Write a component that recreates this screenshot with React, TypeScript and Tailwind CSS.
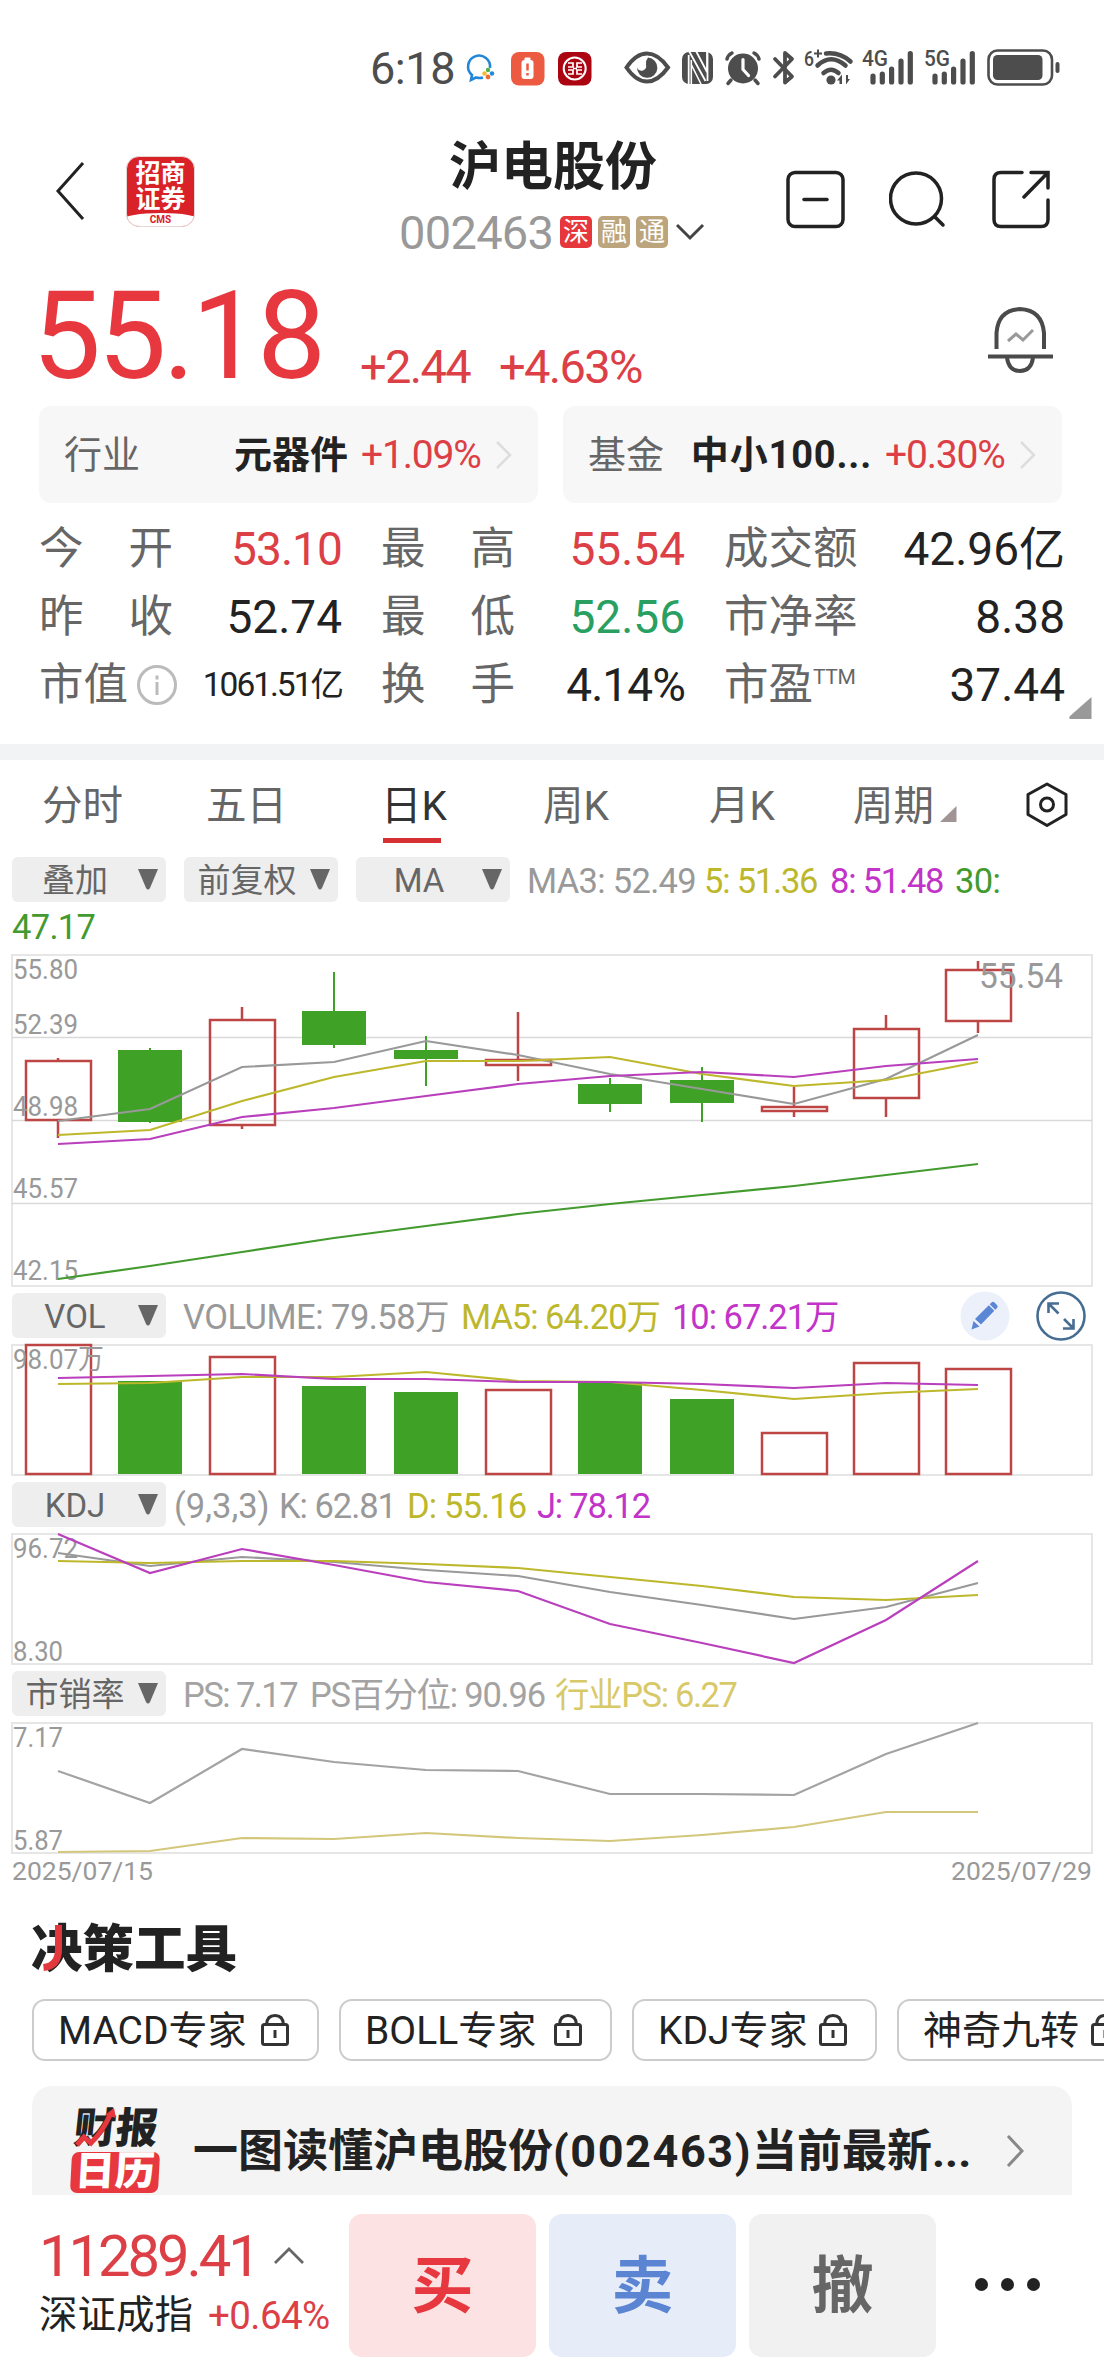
import React from 'react';

const STEP = 92;
const FIRST_X = 58;

const RED = '#bd4644';
const GREEN = '#3fa125';
const YELLOW = '#bdb82b';
const MAGENTA = '#b93fbd';
const GRAY = '#999999';

interface Candle {
  up: boolean;
  top: number;
  bottom: number;
  high: number;
  low: number;
}

const candles: Candle[] = [
  { up: true, top: 106, bottom: 165, high: 103, low: 183 },
  { up: false, top: 95, bottom: 167, high: 93, low: 168 },
  { up: true, top: 65, bottom: 170, high: 52, low: 174 },
  { up: false, top: 56, bottom: 90, high: 17, low: 93 },
  { up: false, top: 95, bottom: 104, high: 81, low: 131 },
  { up: true, top: 105, bottom: 110, high: 57, low: 126 },
  { up: false, top: 129, bottom: 149, high: 123, low: 157 },
  { up: false, top: 125, bottom: 148, high: 112, low: 167 },
  { up: true, top: 152, bottom: 156, high: 132, low: 162 },
  { up: true, top: 74, bottom: 143, high: 60, low: 162 },
  { up: true, top: 15, bottom: 66, high: 6, low: 78 },
];

const volumes = [0, 36, 12, 41, 47, 45, 37, 54, 88, 18, 24];

const Line: React.FC<{ data: number[]; color: string }> = ({ data, color }) => (
  <polyline
    points={data.map((y, i) => `${FIRST_X + i * STEP},${y}`).join(' ')}
    fill="none"
    stroke={color}
    strokeWidth={2.2}
  />
);

interface AxisLabelProps {
  x?: number;
  y: number;
  width: number;
  size?: number;
  children: string;
}

const AxisLabel: React.FC<AxisLabelProps> = ({ x = 13, y, width, size = 28, children }) => (
  <text x={x} y={y} fontSize={size} fill={GRAY} textLength={width} lengthAdjust="spacingAndGlyphs">
    {children}
  </text>
);

const Frame: React.FC<{ height: number; children: React.ReactNode }> = ({ height, children }) => (
  <svg width="1104" height={height} viewBox={`0 0 1104 ${height}`} className="block shrink-0 overflow-visible">
    <rect x="12" y="0" width="1080" height={height} fill="none" stroke="#e6e6e6" strokeWidth="2" />
    {children}
  </svg>
);

const Pill: React.FC<{ label: string; className?: string }> = ({ label, className = '' }) => (
  <div className={`w-[154px] h-[45px] shrink-0 rounded-[6px] bg-[#eeeeee] flex items-center text-[33px] text-[#666666] ${className}`}>
    <span className="w-[126px] text-center whitespace-nowrap pt-[2px]">{label}</span>
    <svg width="20" height="21" viewBox="0 0 20 21" className="shrink-0">
      <path d="M0 0h20l-8 19q-2 3-4 0z" fill="#666666" />
    </svg>
  </div>
);

const Legend: React.FC<{ className: string; children: string }> = ({ className, children }) => (
  <span className={`shrink-0 pt-[3px] ${className}`}>{children}</span>
);

const Lock = () => (
  <svg width="28" height="32" viewBox="0 0 28 32" fill="none" stroke="#333333" strokeWidth="3" className="shrink-0">
    <rect x="1.5" y="10.5" width="25" height="20" rx="2" />
    <path d="M5.500 10.500Q6 1.500 14 1.500T22.500 10.500" />
    <path d="M14 16v8" />
  </svg>
);

const Chip: React.FC<{ label: string; className: string }> = ({ label, className }) => (
  <div className={`h-[62px] shrink-0 rounded-[13px] border-2 border-[#cccccc] flex items-center justify-between pl-[24px] pr-[28px] text-[39px] text-[#222222] ${className}`}>
    <span className="whitespace-nowrap pt-[2px]">{label}</span>
    <Lock />
  </div>
);

const Chevron: React.FC<{ className?: string; color: string }> = ({ className = '', color }) => (
  <svg width="18" height="32" viewBox="0 0 18 32" fill="none" stroke={color} strokeWidth="3" className={`shrink-0 ${className}`}>
    <path d="M2 1l14 15L2 31" />
  </svg>
);

const SignalBars: React.FC<{ x: number; label: string }> = ({ x, label }) => (
  <g>
    <text x={x - 1} y="66" fontSize="22" fontWeight="500" textLength="26" lengthAdjust="spacingAndGlyphs">{label}</text>
    <path
      d={`M${x + 10} 76v6M${x + 19.300} 74v8M${x + 28.600} 69v13M${x + 38} 61v21M${x + 47.300} 53.500v28.500`}
      stroke="#4d4d4d"
      strokeWidth="5.200"
      strokeLinecap="round"
    />
  </g>
);

const StatusBar = () => (
  <div className="h-[100px] shrink-0 flex pl-[370px] pt-[36px]">
    <span className="w-[90px] h-[64px] leading-[65px] text-[45px] text-[#4d4d4d] tracking-[-0.01em]">6:18</span>
    <svg width="620" height="64" viewBox="460 36 620 64" fill="#4d4d4d">
      {/* chat */}
      <path d="M490 68a11 11 0 1 0-18 7l-1 5 5-2.500q4 1 7 0" fill="none" stroke="#2386d9" strokeWidth="2.600" />
      <circle cx="488" cy="70" r="2.200" fill="#4fb443" />
      <circle cx="492" cy="73.500" r="2.200" fill="#2386d9" />
      <circle cx="488" cy="77" r="2.400" fill="#ee6d36" />
      <circle cx="484.500" cy="73.500" r="2.200" fill="#f3bb2c" />
      {/* battery warning */}
      <rect x="511" y="52" width="33.500" height="33.500" rx="8" fill="#ed5a42" />
      <rect x="521.500" y="60" width="12" height="19" rx="3" fill="#fff" />
      <rect x="524.500" y="57.500" width="6" height="3" rx="1" fill="#fff" />
      <path d="M527.500 63.500v7M527.500 73v2.500" stroke="#ed5a42" strokeWidth="2.500" />
      {/* bank */}
      <rect x="558" y="52" width="33.500" height="33.500" rx="8" fill="#ab0512" />
      <circle cx="574.700" cy="68.500" r="11" fill="none" stroke="#fff" strokeWidth="2" />
      <path d="M568 63h5v4h-5M568 70h5v4h-5M582 63h-5v4h5M582 70h-5v4h5M573 68.500h4" fill="none" stroke="#fff" strokeWidth="1.700" />
      {/* eye */}
      <path d="M626.500 67.500Q636 53.500 647 53.500T668 67.500Q658 81.500 647 81.500T626.500 67.500Z" fill="none" stroke="#4d4d4d" strokeWidth="4" />
      <path d="M648 57.500a10.200 10.200 0 1 1-11 10q2 4 6 3 4-1.500 3-6-.5-4 2-7z" />
      {/* nfc */}
      <rect x="682" y="52" width="31" height="32" rx="7" />
      <path d="M688.700 55v30M689 51l16.500 30M696 51l11 21v-21M707.500 51v30" fill="none" stroke="#fff" strokeWidth="1.800" />
      <path d="M691.500 62v22h8z" fill="#4d4d4d" />
      <path d="M691.300 60v25M691.500 65l9.500 19" fill="none" stroke="#fff" strokeWidth="1.600" />
      {/* alarm */}
      <circle cx="743" cy="68.500" r="15" />
      <path d="M727 59q1-4 5-6M759 59q-1-4-5-6M731 80l-3 3.500M755 80l3 3.500" fill="none" stroke="#4d4d4d" strokeWidth="3.500" strokeLinecap="round" />
      <path d="M743 59.500v10l5.500 6" fill="none" stroke="#fff" strokeWidth="3.200" strokeLinecap="round" />
      {/* bluetooth */}
      <path d="M775 59l17 17.500-7 6v-29.500l7 6-17 17.500" fill="none" stroke="#4d4d4d" strokeWidth="3.800" strokeLinejoin="round" strokeLinecap="round" />
      {/* wifi */}
      <text x="804" y="65.500" fontSize="21" fontWeight="500" textLength="10" lengthAdjust="spacingAndGlyphs">6</text>
      <path d="M814 53.500h8M818 49.500v8" stroke="#4d4d4d" strokeWidth="2" />
      <path d="M826 53.500q14-1.500 24.500 8M817.500 65.500q13.500-12.500 28 0M823.500 73q7.500-6.500 15 0" fill="none" stroke="#4d4d4d" strokeWidth="4.500" strokeLinecap="round" />
      <circle cx="831" cy="80" r="4.600" />
      <path d="M837 80.500l5-6v9.500h-2.500v-3.500zM850 79l-4 5.500v-9.500h2v4z" />
      <SignalBars x={863} label="4G" />
      <SignalBars x={925} label="5G" />
      {/* battery */}
      <rect x="988.500" y="50.500" width="63.500" height="34" rx="9" fill="none" stroke="#4d4d4d" strokeWidth="2.600" />
      <rect x="993" y="55" width="49.500" height="25" rx="4.500" />
      <rect x="1055.500" y="62" width="4" height="11" rx="2" />
    </svg>
  </div>
);

const Header = () => (
  <div className="h-[160px] shrink-0 flex">
    <svg width="30" height="60" viewBox="0 0 30 60" fill="none" stroke="#222" strokeWidth="3" className="ml-[55px] mt-[61px]">
      <path d="M28 2L3 30l25 28" />
    </svg>
    <div className="ml-[41px] mt-[56px] w-[69px] h-[71px] rounded-[13px] bg-[#d92128] border border-[#e5d5d5] overflow-hidden flex flex-col items-center">
      <div className="pt-[4px] h-[57px] text-[25px] leading-[26px] font-bold text-white text-center whitespace-nowrap">
        招商
        <br />
        证券
      </div>
      <div className="w-[76px] h-[14px] rounded-t-[50%] bg-white text-[#d92128] text-[10px] leading-[13px] font-bold text-center">CMS</div>
    </div>
    <div className="ml-[203px] w-[308px] flex flex-col">
      <div className="mt-[42px] ml-[51px] text-[52px] h-[54px] font-bold text-[#222222] whitespace-nowrap">沪电股份</div>
      <div className="mt-[13px] flex items-center h-[46px]">
        <span className="w-[162px] pl-px pt-px text-[47px] text-[#999999] tracking-[-0.015em]">002463</span>
        <div className="flex gap-[6px] text-[26px] leading-[32px] text-center text-white">
          <span className="w-[32px] h-[32px] rounded-[5px] bg-[#e6373d]">深</span>
          <span className="w-[32px] h-[32px] rounded-[5px] bg-[#bca47d]">融</span>
          <span className="w-[32px] h-[32px] rounded-[5px] bg-[#bca47d]">通</span>
        </div>
        <svg width="30" height="18" viewBox="0 0 30 18" fill="none" stroke="#444" strokeWidth="3" className="ml-[7px]">
          <path d="M2 2l13 13L28 2" />
        </svg>
      </div>
    </div>
    <div className="ml-[80px] mt-[70px] flex gap-[43px]">
      <svg width="60" height="60" viewBox="0 0 60 60" fill="none" stroke="#222" strokeWidth="3.500" strokeLinecap="round">
        <rect x="2" y="2.500" width="55" height="54" rx="7" />
        <path d="M18 29.500h23" />
      </svg>
      <svg width="60" height="60" viewBox="0 0 60 60" fill="none" stroke="#222" strokeWidth="3.500" strokeLinecap="round">
        <circle cx="27" cy="28.500" r="25.500" />
        <path d="M46 47l8 8" />
      </svg>
      <svg width="60" height="60" viewBox="0 0 60 60" fill="none" stroke="#222" strokeWidth="3.500" strokeLinecap="round">
        <path d="M30 2.500H9q-7 0-7 7v40q0 7 7 7h40q7 0 7-7V30M39 2.500h17V18M56 2.500L32 27" />
      </svg>
    </div>
  </div>
);

const Price = () => (
  <div className="h-[146px] shrink-0 flex text-[#e6383e]">
    <span className="w-[323px] pl-[32px] pt-[15px] text-[123px] tracking-[-0.03em]">55.18</span>
    <span className="w-[139px] pl-[37px] pt-[83px] text-[47px] text-[#dc4046] tracking-[-0.035em]">+2.44</span>
    <span className="w-[200px] pl-[37px] pt-[83px] text-[47px] text-[#dc4046] tracking-[-0.035em]">+4.63%</span>
    <svg width="68" height="70" viewBox="0 0 68 70" fill="none" stroke="#4a4a4a" strokeWidth="4" className="ml-[324px] mt-[46px]">
      <path d="M10.500 43V27Q12 4 34 3q22 1 24 24v16M2 50.500h65" />
      <path d="M21 52q2 13 13 13t13-13" />
      <path d="M22 35l8-7 7 6 10-10" stroke="#999" strokeWidth="3" />
    </svg>
  </div>
);

interface BoardCardProps {
  kind: string;
  name: string;
  change: string;
}

const BoardCard: React.FC<BoardCardProps> = ({ kind, name, change }) => (
  <div className="w-[499px] h-[97px] rounded-[12px] bg-[#f7f7f7] flex items-center pl-[25px] pr-[26px] text-[38px] whitespace-nowrap">
    <span className="text-[#666666]">{kind}</span>
    <span className={`ml-auto font-bold text-[#222222] ${name.endsWith('...') ? 'tracking-[0.022em]' : ''}`}>{name}</span>
    <span className="ml-[13px] w-[122px] pt-[2px] text-[39px] text-[#dc4046] tracking-[-0.03em]">{change}</span>
    <svg width="16" height="28" viewBox="0 0 16 28" fill="none" stroke="#dddddd" strokeWidth="2.500" className="ml-[13px]">
      <path d="M1 1l13 13L1 27" />
    </svg>
  </div>
);

const Stat: React.FC<{ label: React.ReactNode; value: string; valueClass?: string }> = ({
  label,
  value,
  valueClass = 'text-[46px] text-[#222222]',
}) => (
  <div className="h-[68px] flex items-center justify-between">
    <div className="w-[134px] shrink-0 flex justify-between items-center text-[44.5px] text-[#666666] whitespace-nowrap">{label}</div>
    <span className={`whitespace-nowrap ${valueClass}`}>{value}</span>
  </div>
);

const Spread: React.FC<{ a: string; b: string }> = ({ a, b }) => (
  <>
    <span>{a}</span>
    <span>{b}</span>
  </>
);

const Stats = () => (
  <div className="relative mt-[12px] h-[229px] shrink-0 grid grid-cols-[303px_304px_341px] gap-x-[39px] pl-[39px] content-start">
    <Stat label={<Spread a="今" b="开" />} value="53.10" valueClass="text-[46px] text-[#dc4046] tracking-[-0.02em]" />
    <Stat label={<Spread a="最" b="高" />} value="55.54" valueClass="text-[46px] text-[#dc4046]" />
    <Stat label="成交额" value="42.96亿" />
    <Stat label={<Spread a="昨" b="收" />} value="52.74" />
    <Stat label={<Spread a="最" b="低" />} value="52.56" valueClass="text-[46px] text-[#29a061]" />
    <Stat label="市净率" value="8.38" />
    <Stat
      label={
        <>
          <span>市值</span>
          <svg width="40" height="40" viewBox="0 0 40 40" fill="none" stroke="#bbbbbb" strokeWidth="3" className="relative left-[4px]">
            <circle cx="20" cy="20" r="18.500" />
            <path d="M20 17v13M20 10.500v4" />
          </svg>
        </>
      }
      value="1061.51亿"
      valueClass="text-[33.5px] text-[#222222] tracking-[-0.06em]"
    />
    <Stat label={<Spread a="换" b="手" />} value="4.14%" valueClass="text-[46px] text-[#222222] tracking-[-0.02em]" />
    <Stat
      label={
        <div className="flex">
          <span>市盈</span>
          <span className="text-[21px] pt-[4px] tracking-[-0.02em]">TTM</span>
        </div>
      }
      value="37.44"
    />
    <svg width="23" height="23" viewBox="0 0 23 23" className="absolute left-[1069px] top-[182px]">
      <path d="M22.500 0v22H2q-3 0-1-3z" fill="#999" />
    </svg>
  </div>
);

const tabs = [
  { label: '分时', className: 'w-[164px]' },
  { label: '五日', className: 'w-[175px]' },
  { label: '日K', className: 'w-[162px] text-[#333333]' },
  { label: '周K', className: 'w-[166px]' },
  { label: '月K', className: 'w-[144px]' },
  { label: '周期', className: 'w-[87px]' },
];

const Tabs = () => (
  <div className="h-[97px] shrink-0 flex pl-[42px] text-[40.5px] text-[#666666]">
    {tabs.map((tab) => (
      <div key={tab.label} className={`shrink-0 pt-[26px] ${tab.className}`}>
        {tab.label}
        {tab.label === '日K' && <div className="mt-[11px] ml-[2px] w-[58px] h-[5px] bg-[#d63032]" />}
      </div>
    ))}
    <svg width="17" height="17" viewBox="0 0 17 17" className="mt-[46px]">
      <path d="M16.500 0v16H0z" fill="#a09594" />
    </svg>
    <svg width="44" height="46" viewBox="0 0 44 46" fill="none" stroke="#222" strokeWidth="3" strokeLinejoin="round" className="ml-[68px] mt-[22px]">
      <path d="M22 2l19 10.500v20L22 43.500 3 32.500v-20z" />
      <circle cx="22" cy="22.500" r="6.500" />
    </svg>
  </div>
);

const KLineSection = () => (
  <div className="flex flex-col text-[34.5px] whitespace-nowrap">
    <div className="h-[98px] shrink-0">
      <div className="h-[45px] flex items-center pl-[12px]">
        <Pill label="叠加" />
        <Pill label="前复权" className="ml-[18px]" />
        <Pill label="MA" className="ml-[18px]" />
        <Legend className="ml-[17px] w-[177px] text-[#999999] tracking-[-0.02em]">MA3: 52.49</Legend>
        <Legend className="w-[126px] text-[#bdb82b] tracking-[-0.035em]">5: 51.36</Legend>
        <Legend className="w-[125px] text-[#c233c8] tracking-[-0.035em]">8: 51.48</Legend>
        <Legend className="text-[#439a2e] tracking-[-0.02em]">30:</Legend>
      </div>
      <div className="h-[50px] flex items-center pl-[12px] text-[#439a2e] tracking-[-0.02em]">47.17</div>
    </div>

    <Frame height={331}>
      <path d="M12 82.500h1080M12 165.500h1080M12 248.500h1080" stroke="#d9d9d9" strokeWidth="1.500" />
      {candles.map((c, i) => {
        const x = FIRST_X + i * STEP;
        return c.up ? (
          <g key={i} fill="none" stroke={RED} strokeWidth="2.500">
            <rect x={x - 32} y={c.top} width="65" height={c.bottom - c.top} />
            <path d={`M${x} ${c.high}V${c.top}M${x} ${c.bottom}V${c.low}`} />
          </g>
        ) : (
          <g key={i} fill={GREEN}>
            <rect x={x - 32} y={c.top} width="64" height={c.bottom - c.top} />
            <rect x={x - 1} y={c.high} width="2" height={c.low - c.high} />
          </g>
        );
      })}
      <AxisLabel y={24} width={65}>55.80</AxisLabel>
      <AxisLabel y={79} width={65}>52.39</AxisLabel>
      <AxisLabel y={161} width={65}>48.98</AxisLabel>
      <AxisLabel y={243} width={65}>45.57</AxisLabel>
      <AxisLabel y={325} width={65}>42.15</AxisLabel>
      <Line color={GRAY} data={[166, 154, 112, 107, 86, 100, 119, 134, 149, 124, 80]} />
      <Line color={YELLOW} data={[180, 175, 146, 122, 106, 106, 102, 119, 131, 125, 107]} />
      <Line color={MAGENTA} data={[189, 184, 162, 153, 141, 129, 121, 117, 122, 111, 104]} />
      <Line color="#439a2e" data={[324, 311, 297, 283, 271, 259, 249, 240, 231, 220, 209]} />
      <AxisLabel x={979} y={33} width={84} size={35}>55.54</AxisLabel>
    </Frame>

    <div className="mt-[7px] h-[45px] flex items-center pl-[12px]">
      <Pill label="VOL" />
      <Legend className="ml-[17px] w-[278px] text-[#999999] tracking-[-0.015em]">VOLUME: 79.58万</Legend>
      <Legend className="w-[211px] text-[#bdb82b] tracking-[-0.03em]">MA5: 64.20万</Legend>
      <Legend className="w-[288px] text-[#c233c8] tracking-[-0.03em]">10: 67.21万</Legend>
      <svg width="50" height="50" viewBox="0 0 50 50" className="shrink-0">
        <circle cx="25" cy="25" r="24.500" fill="#ebf0fa" />
        <path d="M11.500 38.500l2-8.500 6 5.500zM15 28L31.500 11.500q1.500-1.500 3 0l2.500 2.500q1.500 1.500 0 3L21 33.500z" fill="#5b86d5" />
        <path d="M28.500 13l7 7" stroke="#ebf0fa" strokeWidth="1.200" />
      </svg>
      <svg width="50" height="50" viewBox="0 0 50 50" fill="none" stroke="#466d92" strokeWidth="2.600" className="shrink-0 ml-[26px]">
        <circle cx="25" cy="25" r="23.500" />
        <path d="M12.500 22V12.500H23M12.500 12.500L22.500 22.500M37.500 28v9.500H27M37.500 37.500L28 28" />
      </svg>
    </div>
    <div className="h-[7px] shrink-0" />

    <Frame height={130}>
      {volumes.map((top, i) => {
        const x = FIRST_X + i * STEP;
        return candles[i].up ? (
          <rect key={i} x={x - 32} y={top} width="65" height={129 - top} fill="none" stroke={RED} strokeWidth="2.500" />
        ) : (
          <rect key={i} x={x - 32} y={top} width="64" height={129 - top} fill={GREEN} />
        );
      })}
      <AxisLabel y={24} width={91}>98.07万</AxisLabel>
      <Line color={YELLOW} data={[39, 38, 32, 32, 27, 36, 37, 45, 54, 48, 44]} />
      <Line color={MAGENTA} data={[33, 31, 29, 34, 34, 37, 37, 39, 43, 38, 40]} />
    </Frame>

    <div className="my-[7px] h-[45px] flex items-center pl-[12px]">
      <Pill label="KDJ" />
      <Legend className="ml-[8px] w-[105px] text-[#999999]">(9,3,3)</Legend>
      <Legend className="w-[128px] text-[#999999] tracking-[-0.03em]">K: 62.81</Legend>
      <Legend className="w-[130px] text-[#bdb82b] tracking-[-0.025em]">D: 55.16</Legend>
      <Legend className="text-[#c233c8] tracking-[-0.035em]">J: 78.12</Legend>
    </div>

    <Frame height={130}>
      <AxisLabel y={24} width={65}>96.72</AxisLabel>
      <AxisLabel y={127} width={50}>8.30</AxisLabel>
      <Line color={GRAY} data={[19, 32, 23, 28, 36, 42, 58, 71, 85, 73, 49]} />
      <Line color={YELLOW} data={[27, 29, 27, 27, 30, 34, 43, 52, 63, 66, 61]} />
      <Line color={MAGENTA} data={[0, 39, 15, 31, 48, 57, 90, 109, 129, 86, 27]} />
    </Frame>

    <div className="my-[7px] h-[45px] flex items-center pl-[12px]">
      <Pill label="市销率" />
      <Legend className="ml-[17px] w-[127px] text-[#a3a3a3] tracking-[-0.045em]">PS: 7.17</Legend>
      <Legend className="w-[245px] text-[#a3a3a3] tracking-[-0.035em]">PS百分位: 90.96</Legend>
      <Legend className="text-[#d8c968] tracking-[-0.04em]">行业PS: 6.27</Legend>
    </div>

    <Frame height={130}>
      <AxisLabel y={24} width={50}>7.17</AxisLabel>
      <AxisLabel y={127} width={50}>5.87</AxisLabel>
      <Line color="#a3a3a3" data={[48, 80, 26, 39, 47, 48, 71, 71, 72, 31, 0]} />
      <Line color="#d3c77c" data={[129, 128, 115, 116, 110, 115, 118, 112, 104, 89, 89]} />
    </Frame>
    <div className="h-[36px] flex items-center justify-between px-[12px] text-[26.5px] text-[#999999]">
      <span>2025/07/15</span>
      <span>2025/07/29</span>
    </div>
  </div>
);

const Tools = () => (
  <div className="h-[306px] shrink-0">
    <div className="relative h-[110px] pl-[31px] pt-[35px] text-[51.5px] font-black text-[#222222]">
      决策工具
      <svg width="30" height="52" viewBox="0 0 30 52" fill="none" className="absolute left-[40px] top-[34px]">
        <path d="M18.500 2v24Q18.500 43 3.500 44.500" stroke="#e2383d" strokeWidth="7" />
      </svg>
    </div>
    <div className="flex pl-[32px] gap-[20px]">
      <Chip label="MACD专家" className="w-[287px]" />
      <Chip label="BOLL专家" className="w-[273px]" />
      <Chip label="KDJ专家" className="w-[245px]" />
      <Chip label="神奇九转" className="w-[252px]" />
    </div>
    <div className="ml-[32px] mt-[25px] w-[1040px] h-[109px] rounded-t-[20px] bg-[#f4f4f4] flex items-start">
      <div className="ml-[39px] mt-[21px] w-[90px] h-[87px] relative">
        <div className="h-[45px] leading-[43px] pl-[3px] text-[42px] font-black text-[#222222] whitespace-nowrap -skew-x-6">财报</div>
        <div className="w-[88px] h-[41px] leading-[40px] rounded-[7px] bg-[#e6383e] text-center text-[40px] font-black text-white whitespace-nowrap -skew-x-3">日历</div>
        <svg width="50" height="44" viewBox="0 0 50 44" fill="none" className="absolute left-[2px] top-0">
          <path d="M4 38l7-8 7 6Q30 24 37 8" stroke="#e6383e" strokeWidth="5" />
          <path d="M32 8l9-7 2 10z" fill="#e6383e" />
        </svg>
      </div>
      <span className="ml-[32px] mt-[43px] w-[802px] text-[45px] font-bold text-[#222222] whitespace-nowrap">
        一图读懂沪电股份<span className="tracking-[0.035em]">(002463)</span>当前最新...
      </span>
      <Chevron color="#888888" className="ml-[11px] mt-[49px]" />
    </div>
  </div>
);

const TradeBar = () => (
  <div className="h-[181px] shrink-0 flex pt-[19px]">
    <div className="w-[349px] pl-[39px] whitespace-nowrap">
      <div className="flex items-center mt-[13px]">
        <span className="w-[234px] text-[58px] text-[#dc4046] tracking-[-0.053em]">11289.41</span>
        <svg width="32" height="18" viewBox="0 0 32 18" fill="none" stroke="#666" strokeWidth="2.800">
          <path d="M2 16L16 2l14 14" />
        </svg>
      </div>
      <div className="flex items-center mt-[10px]">
        <span className="w-[169px] text-[38.5px] text-[#222222]">深证成指</span>
        <span className="pt-[2px] text-[38.5px] text-[#dc4046] tracking-[-0.015em]">+0.64%</span>
      </div>
    </div>
    <div className="flex gap-[13px] text-[62px] font-bold">
      <div className="w-[187px] h-[143px] rounded-[13px] bg-[#fce2e3] text-[#e6383e] flex items-center justify-center pt-[3px]">买</div>
      <div className="w-[187px] h-[143px] rounded-[13px] bg-[#e6edf9] text-[#5b85d3] flex items-center justify-center pt-[3px]">卖</div>
      <div className="w-[187px] h-[143px] rounded-[13px] bg-[#f1f1f1] text-[#666666] flex items-center justify-center pt-[3px]">撤</div>
    </div>
    <div className="ml-[39px] mt-[64px] flex gap-[13px]">
      <i className="w-[13px] h-[13px] rounded-full bg-[#222222]" />
      <i className="w-[13px] h-[13px] rounded-full bg-[#222222]" />
      <i className="w-[13px] h-[13px] rounded-full bg-[#222222]" />
    </div>
  </div>
);

const App: React.FC = () => (
  <div className="w-[1104px] h-[2376px] overflow-hidden bg-white flex flex-col leading-none font-['Roboto','Noto_Sans_CJK_SC',sans-serif]">
    <StatusBar />
    <Header />
    <Price />
    <div className="flex shrink-0 gap-[25px] pl-[39px]">
      <BoardCard kind="行业" name="元器件" change="+1.09%" />
      <BoardCard kind="基金" name="中小100..." change="+0.30%" />
    </div>
    <Stats />
    <div className="h-[16px] shrink-0 bg-[#f2f3f5]" />
    <Tabs />
    <KLineSection />
    <Tools />
    <TradeBar />
  </div>
);

export default App;
